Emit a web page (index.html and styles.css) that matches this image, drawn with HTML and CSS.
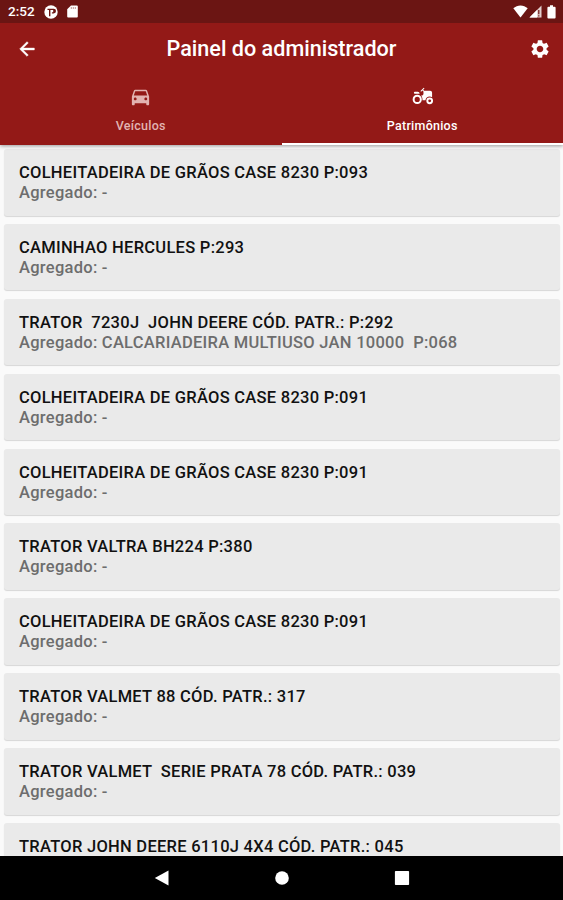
FILE: index.html
```
<!DOCTYPE html>
<html lang="pt-BR">
<head>
<meta charset="utf-8">
<title>Painel do administrador</title>
<link rel="stylesheet" href="styles.css">
</head>
<body>
<div class="screen">
  <header class="header">
    <div class="status">
      <span class="clock">2:52</span>
      <svg class="st-app" viewBox="0 0 14 14"><circle cx="7" cy="7" r="6.7" fill="#fff"/><path d="M3.500 3.800h6.200a2.300 2.300 0 0 1 0 4.600H7.900V7.200h1.300V5H6.400v6.300H5V5H3.500z" fill="#6b1513"/></svg>
      <svg class="st-sd" viewBox="0 0 11 13"><path d="M4 .5h5.800q1 0 1 1v10q0 1-1 1H1.200q-1 0-1-1V4.300z" fill="#fff"/><path d="M4.300 2v2M6.300 2v2M8.300 2v2" stroke="#b98a89" stroke-width=".9"/></svg>
      <span class="spacer"></span>
      <svg class="st-wifi" viewBox="0 0 15 13"><path d="M7.500 12.500.3 3.300C4.300-.6 10.700-.6 14.700 3.300z" fill="#fff"/></svg>
      <svg class="st-cell" viewBox="0 0 13 13"><path d="M12.500.5v12H.5z" fill="#e2cfce"/><path d="M8 5v7.500H.5z" fill="#fff"/><path d="M9.800 5v4.300M9.800 10.300v1.300" stroke="#6b1513" stroke-width="1.200"/></svg>
      <svg class="st-bat" viewBox="0 0 9 14"><path d="M3 .3h3v1.500h1.600q1 0 1 1v9.800q0 1-1 1H1.400q-1 0-1-1V2.800q0-1 1-1H3z" fill="#fff"/></svg>
    </div>
    <div class="bar">
      <svg class="back" viewBox="0 0 24 24"><path d="M20 11H7.830l5.590-5.590L12 4l-8 8 8 8 1.410-1.410L7.830 13H20v-2z"/></svg>
      <h1 class="title">Painel do administrador</h1>
      <svg class="gear" viewBox="0 0 24 24"><path d="M19.140 12.940c.04-.3.060-.61.060-.94 0-.32-.02-.64-.07-.94l2.030-1.580c.18-.14.230-.41.120-.61l-1.920-3.320c-.12-.22-.37-.29-.59-.22l-2.390.96c-.5-.38-1.030-.7-1.620-.94l-.36-2.540c-.04-.24-.24-.41-.48-.41h-3.840c-.24 0-.43.170-.47.410l-.36 2.540c-.59.240-1.130.570-1.620.940l-2.390-.96c-.22-.08-.47 0-.59.220L2.740 8.870c-.12.210-.08.470.120.610l2.030 1.580c-.05.300-.09.630-.09.940s.02.640.070.940l-2.030 1.580c-.18.140-.23.410-.12.610l1.920 3.320c.12.220.370.290.590.220l2.390-.96c.5.380 1.030.7 1.620.94l.36 2.540c.05.240.240.410.480.410h3.840c.24 0 .44-.17.470-.41l.36-2.540c.59-.24 1.130-.56 1.620-.94l2.390.96c.22.080.470 0 .59-.22l1.920-3.320c.12-.22.070-.47-.12-.61l-2.010-1.580zM12 15.600c-1.980 0-3.600-1.620-3.600-3.600s1.620-3.600 3.600-3.600 3.600 1.620 3.600 3.600-1.620 3.600-3.600 3.600z"/></svg>
    </div>
    <nav class="tabs">
      <div class="tab">
        <svg viewBox="0 0 24 24"><path d="M18.920 6.010C18.720 5.420 18.160 5 17.500 5h-11c-.66 0-1.210.42-1.420 1.010L3 12v8c0 .55.450 1 1 1h1c.55 0 1-.45 1-1v-1h12v1c0 .55.450 1 1 1h1c.55 0 1-.45 1-1v-8l-2.080-5.990zM6.500 16c-.83 0-1.500-.67-1.500-1.500S5.670 13 6.500 13s1.500.67 1.500 1.500S7.330 16 6.500 16zm11 0c-.83 0-1.500-.67-1.500-1.500s.67-1.500 1.500-1.500 1.500.67 1.500 1.500-.67 1.500-1.500 1.500zM5 11l1.500-4.500h11L19 11H5z"/></svg>
        <span>Veículos</span>
      </div>
      <div class="tab active">
        <svg viewBox="0 0 24 24"><path d="M19.500 12c.93 0 1.780.28 2.500.76V8c0-1.100-.9-2-2-2h-6.290l-1.060-1.060 1.410-1.410-.71-.71-3.530 3.530.71.71 1.410-1.410L13 6.710V9c0 1.100-.9 2-2 2h-.54c.95 1.060 1.540 2.460 1.540 4 0 .34-.04.670-.09 1h3.140c.25-2.250 2.140-4 4.450-4z"/><path d="M19.500 13a3.500 3.500 0 1 0 0 7 3.500 3.500 0 0 0 0-7zm0 5a1.500 1.500 0 1 1 0-3 1.500 1.500 0 0 1 0 3zM4 9h5c0-1.100-.9-2-2-2H4a1 1 0 0 0 0 2z"/><path fill-rule="evenodd" d="M6.500 10.200a4.800 4.800 0 1 0 0 9.600 4.800 4.800 0 0 0 0-9.600zm0 2.100a2.700 2.700 0 1 1 0 5.400 2.700 2.700 0 0 1 0-5.400z"/></svg>
        <span>Patrimônios</span>
      </div>
    </nav>
  </header>
  <main class="list">
    <article class="card"><h2>COLHEITADEIRA DE GRÃOS CASE 8230 P:093</h2><p>Agregado: -</p></article>
    <article class="card"><h2>CAMINHAO HERCULES P:293</h2><p>Agregado: -</p></article>
    <article class="card"><h2>TRATOR  7230J  JOHN DEERE CÓD. PATR.: P:292</h2><p>Agregado: CALCARIADEIRA MULTIUSO JAN 10000  P:068</p></article>
    <article class="card"><h2>COLHEITADEIRA DE GRÃOS CASE 8230 P:091</h2><p>Agregado: -</p></article>
    <article class="card"><h2>COLHEITADEIRA DE GRÃOS CASE 8230 P:091</h2><p>Agregado: -</p></article>
    <article class="card"><h2>TRATOR VALTRA BH224 P:380</h2><p>Agregado: -</p></article>
    <article class="card"><h2>COLHEITADEIRA DE GRÃOS CASE 8230 P:091</h2><p>Agregado: -</p></article>
    <article class="card"><h2>TRATOR VALMET 88 CÓD. PATR.: 317</h2><p>Agregado: -</p></article>
    <article class="card"><h2>TRATOR VALMET  SERIE PRATA 78 CÓD. PATR.: 039</h2><p>Agregado: -</p></article>
    <article class="card"><h2>TRATOR JOHN DEERE 6110J 4X4 CÓD. PATR.: 045</h2></article>
  </main>
  <footer class="sysnav">
    <svg viewBox="0 0 16 16"><path d="M14.500.500v15L.8 8z"/></svg>
    <svg viewBox="0 0 16 16"><circle cx="8" cy="8" r="6.800"/></svg>
    <svg viewBox="0 0 16 16"><rect x=".9" y=".9" width="14.200" height="14.200" rx=".8"/></svg>
  </footer>
</div>
</body>
</html>
```
FILE: styles.css
```
* { box-sizing: border-box; }
body { margin: 0; font-family: Roboto, "Liberation Sans", sans-serif; background: #fafafa; }
h1, h2, p { margin: 0; }
.screen { width: 563px; height: 900px; display: flex; flex-direction: column; overflow: hidden; }
.header { flex: none; height: 145px; background: #931917; color: #fff; position: relative; z-index: 1; box-shadow: 0 1px 4px rgba(0,0,0,.4); }
.status { height: 23px; background: #6b1513; display: flex; align-items: center; padding: 0 7px 0 8px; }
.clock { font-size: 13.500px; font-weight: 500; width: 36px; line-height: 23px; }
.st-app { width: 14px; height: 14px; margin-right: 9px; }
.st-sd { width: 11px; height: 13px; }
.spacer { flex: 1; }
.st-wifi { width: 15px; height: 13px; margin-right: 1px; }
.st-cell { width: 13px; height: 13px; margin-right: 5px; }
.st-bat { width: 9px; height: 14px; }
.bar { height: 52px; display: flex; align-items: center; justify-content: space-between; padding: 0 12px 0 16px; }
.bar svg, .tab svg, .sysnav svg { fill: currentColor; }
.back { width: 22px; height: 22px; stroke: currentColor; stroke-width: .5; }
.gear { width: 22px; height: 22px; }
.title { font-size: 21.600px; line-height: 28px; font-weight: 500; margin-right: 4px; }
.tabs { height: 70px; display: flex; }
.tab { flex: 1; display: flex; flex-direction: column; align-items: center; padding-top: 10px; color: #e2b3b1; font-size: 12.500px; line-height: 16px; font-weight: 500; letter-spacing: .25px; border-bottom: 2px solid transparent; }
.tab svg { width: 23px; height: 23px; margin-bottom: 10px; }
.tab.active { color: #fff; border-bottom-color: #fff; }
.list { flex: 1; min-height: 0; overflow: hidden; display: flex; flex-direction: column; gap: 8.400px; padding: 4px 3px 0 4px; }
.card { flex: none; height: 66.500px; padding: 14px 15px 0; background: #eaeaea; border-radius: 3px; box-shadow: 0 1px 1px rgba(0,0,0,.14); white-space: pre; letter-spacing: .27px; }
.card h2 { font-size: 16.500px; line-height: 20px; font-weight: 500; color: #111; }
.card p { font-size: 16.500px; line-height: 20px; font-weight: 500; color: #6d6d6d; }
.sysnav { flex: none; height: 44px; background: #000; color: #fff; display: flex; justify-content: center; gap: 104px; align-items: center; }
.sysnav svg { width: 16px; height: 16px; }
```
